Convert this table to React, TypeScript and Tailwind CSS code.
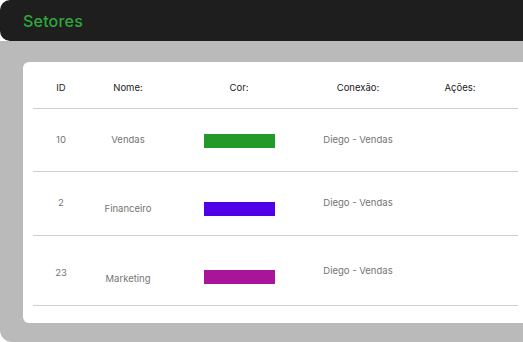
const setores = [
  { id: "10", nome: "Vendas", cor: "#229a2a", conexao: "Diego - Vendas", h: "h-[62px]", mt: ["mt-[25px]", "mt-[25px]", "mt-[25px]", "mt-[25px]"] },
  { id: "2", nome: "Financeiro", cor: "#5000e6", conexao: "Diego - Vendas", h: "h-[63px]", mt: ["mt-[25px]", "mt-[31px]", "mt-[30px]", "mt-[25px]"] },
  { id: "23", nome: "Marketing", cor: "#a8149a", conexao: "Diego - Vendas", h: "h-[69px]", mt: ["mt-[31px]", "mt-[37px]", "mt-[34px]", "mt-[29px]"] },
];

const cols = "grid grid-cols-[56px_78px_144px_94px_110px]";

export default function App() {
  return (
    <div className="w-[523px] h-[342px] bg-white flex flex-col" style={{ fontFamily: "Inter, 'Liberation Sans', sans-serif" }}>
      <header className="h-[41px] shrink-0 bg-[#1e1e1e] rounded-l-[10px] pl-[23px] flex items-center">
        <h1 className="text-[16px] font-medium text-[#2fa83a] tracking-[0.2px]">Setores</h1>
      </header>

      <div className="flex-1 bg-[#bababa] rounded-bl-[12px] pt-[21px] pl-[23px] pb-[19px]">
        <div className="h-full bg-white rounded-l-[6px] pl-[10px] pr-[5px]">
          <div className={`${cols} h-[47px] pt-[20px] border-b border-[#cfcfcf] text-[9.5px] leading-[12px] text-[#222] text-center`}>
            <span>ID</span>
            <span>Nome:</span>
            <span>Cor:</span>
            <span>Conexão:</span>
            <span>Ações:</span>
          </div>

          {setores.map((s) => (
            <div key={s.id} className={`${cols} ${s.h} box-content border-b border-[#cfcfcf] items-start text-[9.5px] leading-[12px] text-[#747474] text-center`}>
              <span className={s.mt[0]}>{s.id}</span>
              <span className={s.mt[1]}>{s.nome}</span>
              <div className={`${s.mt[2]} flex justify-center`}>
                <div className="w-[71px] h-[14px]" style={{ backgroundColor: s.cor }} />
              </div>
              <span className={s.mt[3]}>{s.conexao}</span>
              <span />
            </div>
          ))}
        </div>
      </div>
    </div>
  );
}
